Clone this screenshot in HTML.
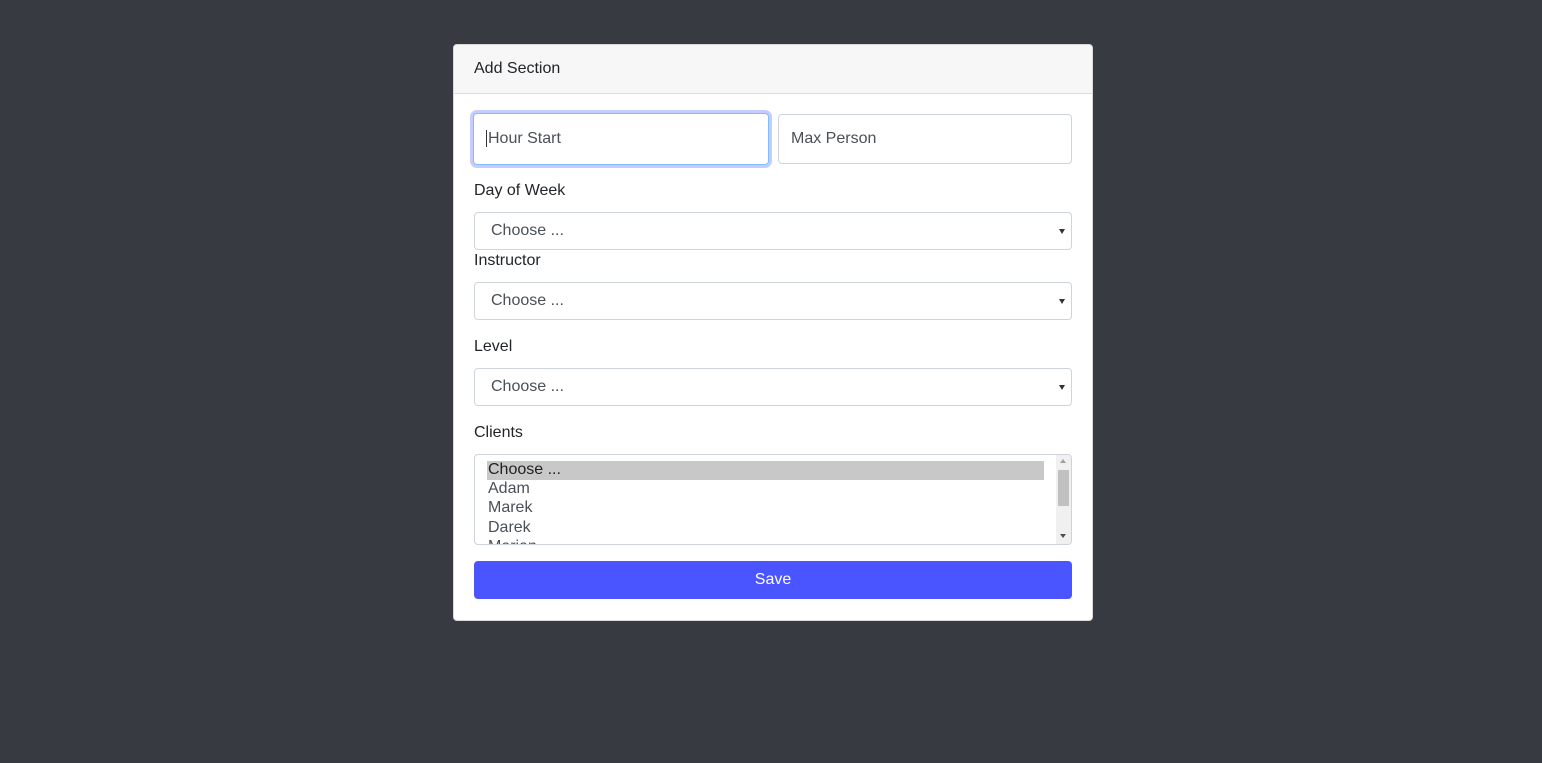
<!DOCTYPE html>
<html><head><style>
body{margin:0;width:1542px;height:763px;background:#383a42;font-family:"Liberation Sans",sans-serif;position:relative;overflow:hidden}
.a{position:absolute;box-sizing:border-box}
.card{left:453px;top:44px;width:640px;height:577px;background:#fff;border:1px solid #d9d9d9;border-radius:4px}
.hdr{left:454px;top:45px;width:638px;height:49px;background:#f7f7f7;border-bottom:1px solid #dcdcdc;border-radius:4px 4px 0 0;font-size:16px;color:#212529;padding:15px 0 0 20px}
.in{border:1px solid #ced4da;border-radius:4px;background:#fff;font-size:16px;color:#495057;padding-left:16px}
.lbl{font-size:16px;color:#212529}
.sel{left:474px;width:598px;height:38px;border:1px solid #ced4da;border-radius:4px;font-size:16px;color:#495057;padding:9px 0 0 16px}
.sel:after{content:"";position:absolute;right:6px;top:16px;border:3px solid transparent;border-top:5px solid #333}
.opt{left:488px;font-size:16px;color:#495057}
</style></head><body>
<div class="a card"></div>
<div class="a hdr">Add Section</div>
<div class="a in" style="left:473px;top:113px;width:296px;height:52px;border:1px solid #80bdff;box-shadow:0 0 0 3px #c5ccff;padding-top:16px;padding-left:12px"><span style="border-left:1px solid #333;padding-left:1px">Hour Start</span></div>
<div class="a in" style="left:778px;top:114px;width:294px;height:50px;padding-top:15px;padding-left:12px">Max Person</div>
<div class="a lbl" style="left:474px;top:182px">Day of Week</div>
<div class="a sel" style="top:212px">Choose ...</div>
<div class="a lbl" style="left:474px;top:252px">Instructor</div>
<div class="a sel" style="top:282px">Choose ...</div>
<div class="a lbl" style="left:474px;top:338px">Level</div>
<div class="a sel" style="top:368px">Choose ...</div>
<div class="a lbl" style="left:474px;top:424px">Clients</div>
<div class="a" style="left:474px;top:454px;width:598px;height:91px;border:1px solid #ced4da;border-radius:4px;overflow:hidden">
<div class="a" style="left:12px;top:6px;width:557px;height:19px;background:#c8c8c8"></div>
<div class="a" style="left:581px;top:0;width:16px;height:91px;background:#f0f0f0"></div>
<div class="a" style="left:583px;top:15px;width:11px;height:36px;background:#c1c1c1"></div>
<div class="a" style="left:585px;top:4px;border:3px solid transparent;border-bottom:4px solid #a0a0a0;border-top:0"></div>
<div class="a" style="left:585px;top:79px;border:3px solid transparent;border-top:4px solid #505050;border-bottom:0"></div>
</div>
<div class="a opt" style="top:461px;color:#222">Choose ...</div>
<div class="a opt" style="top:480px">Adam</div>
<div class="a opt" style="top:499px">Marek</div>
<div class="a opt" style="top:519px">Darek</div>
<div class="a" style="left:475px;top:538px;width:580px;height:6px;overflow:hidden"><div class="a opt" style="left:13px;top:0">Marian</div></div>
<div class="a" style="left:474px;top:561px;width:598px;height:38px;background:#4a55ff;border-radius:4px;color:#fff;font-size:16px;text-align:center;padding-top:10px">Save</div>
</body></html>
